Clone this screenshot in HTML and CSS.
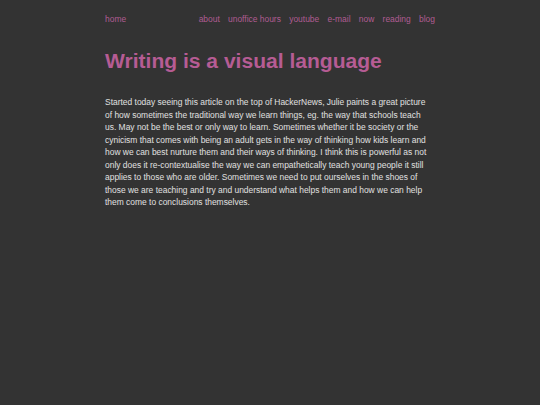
FILE: index.html
```html
<!DOCTYPE html>
<html>
<head>
<meta charset="utf-8">
<link rel="stylesheet" href="styles.css">
</head>
<body>
<div class="page">
  <nav class="nav">
    <a class="home" href="#">home</a>
    <div class="links">
      <a href="#">about</a>
      <a href="#">unoffice hours</a>
      <a href="#">youtube</a>
      <a href="#">e-mail</a>
      <a href="#">now</a>
      <a href="#">reading</a>
      <a href="#">blog</a>
    </div>
  </nav>
  <h1 class="title">Writing is a visual language</h1>
  <p class="body">Started today seeing this article on the top of HackerNews, Julie paints a great picture of how sometimes the traditional way we learn things, eg. the way that schools teach us. May not be the best or only way to learn. Sometimes whether it be society or the cynicism that comes with being an adult gets in the way of thinking how kids learn and how we can best nurture them and their ways of thinking. I think this is powerful as not only does it re-contextualise the way we can empathetically teach young people it still applies to those who are older. Sometimes we need to put ourselves in the shoes of those we are teaching and try and understand what helps them and how we can help them come to conclusions themselves.</p>
</div>
</body>
</html>
```
FILE: styles.css
```css
html, body {
  margin: 0;
  padding: 0;
  background: #333333;
}
body {
  font-family: "Liberation Sans", Arial, sans-serif;
  height: 405px;
}
.page {
  width: 330px;
  margin: 0 auto;
  padding-top: 14px;
}
.nav {
  display: flex;
  justify-content: space-between;
  font-size: 8.45px;
  line-height: 11px;
}
.nav a {
  color: #b05c92;
  text-decoration: none;
}
.links {
  display: flex;
  gap: 8.3px;
}
.title {
  margin: 23px 0 0;
  font-size: 21.05px;
  line-height: 26px;
  font-weight: bold;
  color: #b65c94;
}
.body {
  max-width: 326px;
  margin: 22px 0 0;
  font-size: 8.45px;
  line-height: 12.5px;
  color: #e0e0e0;
}
```
